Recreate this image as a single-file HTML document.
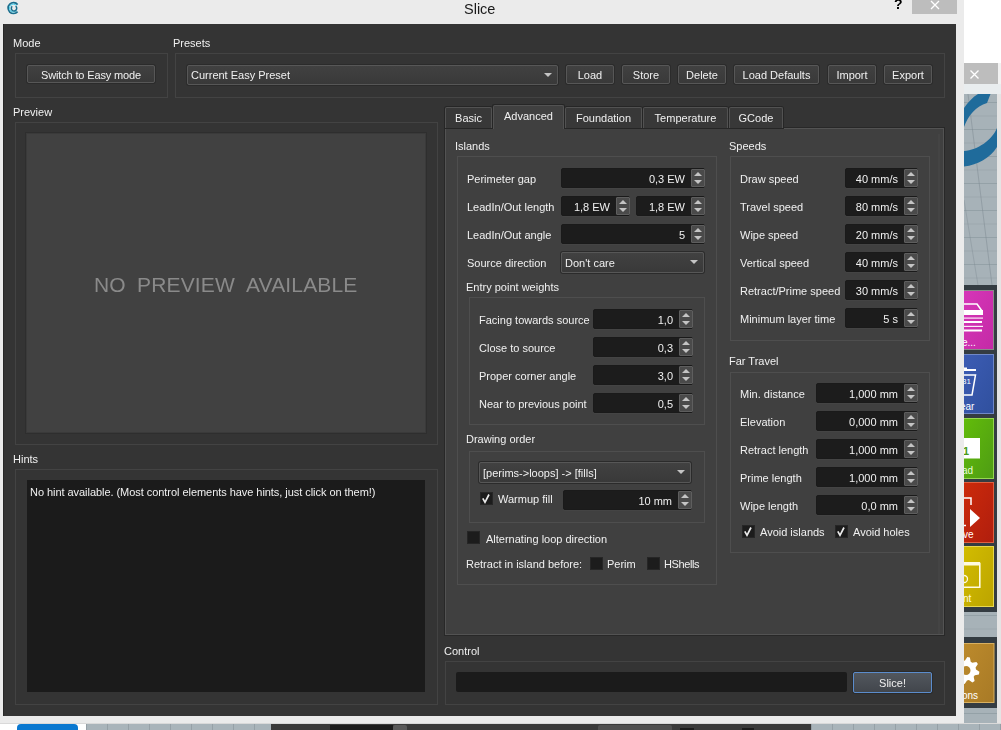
<!DOCTYPE html><html><head><meta charset="utf-8"><style>
*{margin:0;padding:0;box-sizing:border-box}
html,body{width:1001px;height:730px;overflow:hidden;background:#ebebeb;font-family:"Liberation Sans",sans-serif}
.b{position:absolute}
.t{position:absolute;white-space:nowrap;font-size:11px;line-height:13px;color:#f0f0f0;letter-spacing:0px;will-change:transform}
.frame{border:1px solid rgba(255,255,255,0.075)}
.btn{background:linear-gradient(#414141,#393939);border:1px solid #575757;border-radius:2px;box-shadow:0 0 0 1px #2b2b2b}
.spin{background:#1c1c1c;border:1px solid #1a1a1a;border-radius:2px;box-shadow:0 1px 0 #444}
.spb{background:#4a4a4a;border:1px solid #5e5e5e;border-radius:1px}
.chk{background:#1c1c1c;border:1px solid #262626}
.up{position:absolute;width:0;height:0;border-left:4px solid transparent;border-right:4px solid transparent;border-bottom:4px solid #c4c4c4}
.dn{position:absolute;width:0;height:0;border-left:4px solid transparent;border-right:4px solid transparent;border-top:4px solid #c4c4c4}
.tab{background:#383838;border:1px solid #525252;border-bottom:none;border-radius:2px 2px 0 0;box-shadow:0 0 0 1px #262626}
.slb{border-color:#5b8ccc;background:linear-gradient(#52575e,#42464c)}
.grid{background-color:#a9b4ba;background-image:linear-gradient(90deg,rgba(90,100,110,0.25) 1px,transparent 1px);background-size:21px 13px}
</style></head><body>

<svg class="b" style="left:964px;top:0" width="37" height="730" viewBox="964 0 37 730"><rect x="964" y="0" width="37" height="63" fill="#ffffff"/><rect x="964" y="63" width="34" height="21" fill="#bdbdbd"/><rect x="998" y="63" width="3" height="21" fill="#f2f2f2"/><path d="M970.5 70.5 L978.5 78.5 M978.5 70.5 L970.5 78.5" stroke="#fff" stroke-width="1.3"/><rect x="964" y="84" width="37" height="10" fill="#e9edef"/><rect x="997" y="94" width="4" height="636" fill="#e4e4e4"/><g transform="translate(964 94)"><rect x="0" y="0" width="33" height="191" fill="#a7b2b8"/><rect x="0" y="8.0" width="33" height="1" fill="#7f8b93" opacity="0.45"/><rect x="0" y="21.5" width="33" height="1" fill="#7f8b93" opacity="0.22"/><rect x="0" y="35.0" width="33" height="1" fill="#7f8b93" opacity="0.45"/><rect x="0" y="48.5" width="33" height="1" fill="#7f8b93" opacity="0.22"/><rect x="0" y="62.0" width="33" height="1" fill="#7f8b93" opacity="0.45"/><rect x="0" y="75.5" width="33" height="1" fill="#7f8b93" opacity="0.22"/><rect x="0" y="89.0" width="33" height="1" fill="#7f8b93" opacity="0.45"/><rect x="0" y="102.5" width="33" height="1" fill="#7f8b93" opacity="0.22"/><rect x="0" y="116.0" width="33" height="1" fill="#7f8b93" opacity="0.45"/><rect x="0" y="129.5" width="33" height="1" fill="#7f8b93" opacity="0.22"/><rect x="0" y="143.0" width="33" height="1" fill="#7f8b93" opacity="0.45"/><rect x="0" y="156.5" width="33" height="1" fill="#7f8b93" opacity="0.22"/><rect x="0" y="170.0" width="33" height="1" fill="#7f8b93" opacity="0.45"/><rect x="0" y="183.5" width="33" height="1" fill="#7f8b93" opacity="0.22"/></g><path d="M968 94 L992 285" stroke="#7f8b93" stroke-width="1" opacity="0.5"/><path d="M964 200 L978 285" stroke="#7f8b93" stroke-width="1" opacity="0.4"/><g transform="translate(964 94)"><path d="M 14 0 L 26.5 0 L 23 9 C 12 12 4 22 0 33 L 0 14 C 4 8 9 3 14 0 Z" fill="#1f6b9b"/><path d="M 33 34 L 33 53 C 26 64 14 71 0 72.5 L 0 57 C 14 56 28 46 33 34 Z" fill="#1f6b9b"/></g><rect x="964" y="285" width="33" height="327" fill="#343c42"/><defs><linearGradient id="g0" x1="0" y1="0" x2="1" y2="1"><stop offset="0" stop-color="#d636b8"/><stop offset="1" stop-color="#c42aa6"/></linearGradient></defs><rect x="963.5" y="290.5" width="30" height="59" fill="url(#g0)" stroke="#8a8a8a" stroke-width="1"/><defs><linearGradient id="g1" x1="0" y1="0" x2="1" y2="1"><stop offset="0" stop-color="#3c5cb4"/><stop offset="1" stop-color="#30509e"/></linearGradient></defs><rect x="963.5" y="354.5" width="30" height="59" fill="url(#g1)" stroke="#7088c8" stroke-width="1"/><defs><linearGradient id="g2" x1="0" y1="0" x2="1" y2="1"><stop offset="0" stop-color="#62bc0a"/><stop offset="1" stop-color="#4e9c14"/></linearGradient></defs><rect x="963.5" y="418.5" width="30" height="60" fill="url(#g2)" stroke="#96d850" stroke-width="1"/><defs><linearGradient id="g3" x1="0" y1="0" x2="1" y2="1"><stop offset="0" stop-color="#cc2a0a"/><stop offset="1" stop-color="#b01e0e"/></linearGradient></defs><rect x="963.5" y="482.5" width="30" height="60" fill="url(#g3)" stroke="#e06040" stroke-width="1"/><defs><linearGradient id="g4" x1="0" y1="0" x2="1" y2="1"><stop offset="0" stop-color="#d2bc00"/><stop offset="1" stop-color="#bca400"/></linearGradient></defs><rect x="963.5" y="546.5" width="30" height="60" fill="url(#g4)" stroke="#e8d850" stroke-width="1"/><path d="M964 304 L977 304 L982 311" fill="none" stroke="#fff" stroke-width="1.6"/><rect x="964" y="310" width="19" height="5" fill="#fff"/><rect x="964" y="317.5" width="19" height="1.2" fill="#fff" opacity="0.9"/><rect x="964" y="321" width="18" height="2" fill="#fff"/><rect x="964" y="325.8" width="19" height="1.2" fill="#fff" opacity="0.9"/><rect x="964" y="329.5" width="18" height="2" fill="#fff"/><text x="962" y="346" font-family="Liberation Sans" font-size="10" fill="#fff">e...</text><rect x="964" y="369" width="12" height="2" fill="#fff"/><rect x="964" y="367.5" width="3" height="2" fill="#fff"/><path d="M964 375 L975.5 375 L972 395 L964 395" fill="none" stroke="#fff" stroke-width="1.5"/><text x="962" y="384" font-family="Liberation Sans" font-size="8" fill="#fff">31</text><text x="960" y="409.5" font-family="Liberation Sans" font-size="10" fill="#fff">ear</text><rect x="964" y="438" width="16" height="20.5" fill="#fff"/><text x="963" y="455" font-family="Liberation Sans" font-size="11" font-weight="bold" fill="#4a9a12">1</text><text x="962" y="473.5" font-family="Liberation Sans" font-size="10" fill="#eaffd8">ad</text><path d="M964 498 L971 498 L971 505" fill="none" stroke="#fff" stroke-width="1.5"/><path d="M964 525.5 L966 525.5" fill="none" stroke="#fff" stroke-width="1.5"/><path d="M970 509 L980 518 L970 527 Z" fill="#fff"/><text x="963" y="538" font-family="Liberation Sans" font-size="10" fill="#fff">ve</text><path d="M964 563.5 L979.8 563.5 L979.8 587.2 L964 587.2" fill="none" stroke="#fffbe0" stroke-width="1.6"/><rect x="964" y="562" width="16" height="3.5" fill="#fffbe0"/><circle cx="964" cy="579" r="3.5" fill="none" stroke="#fffbe0" stroke-width="1.3"/><text x="963" y="601.5" font-family="Liberation Sans" font-size="10" fill="#fffbe0">nt</text><g transform="translate(964 612)"><rect x="0" y="0" width="33" height="25" fill="#a7b2b8"/><rect x="0" y="3.0" width="33" height="1" fill="#7f8b93" opacity="0.45"/><rect x="0" y="16.5" width="33" height="1" fill="#7f8b93" opacity="0.22"/></g><rect x="964" y="637" width="33" height="71" fill="#343c42"/><defs><linearGradient id="g9" x1="0" y1="0" x2="1" y2="1"><stop offset="0" stop-color="#bc8a2c"/><stop offset="1" stop-color="#a87a26"/></linearGradient></defs><rect x="963.5" y="643.5" width="30.5" height="59" fill="url(#g9)" stroke="#d8b060" stroke-width="1"/><path d="M976.0 669.5 L979.4 671.8 L978.9 674.4 L974.8 675.2 L973.7 676.8 L974.6 680.9 L972.4 682.4 L968.9 680.1 L967.0 680.5 L964.7 683.9 L962.1 683.4 L961.3 679.3 L959.7 678.2 L955.6 679.1 L954.1 676.9 L956.4 673.4 L956.0 671.5 L952.6 669.2 L953.1 666.6 L957.2 665.8 L958.3 664.2 L957.4 660.1 L959.6 658.6 L963.1 660.9 L965.0 660.5 L967.3 657.1 L969.9 657.6 L970.7 661.7 L972.3 662.8 L976.4 661.9 L977.9 664.1 L975.6 667.6 Z M970.5 670.5 A4.5 4.5 0 1 0 961.5 670.5 A4.5 4.5 0 1 0 970.5 670.5 Z" fill="#fff" fill-rule="evenodd"/><text x="962" y="698.5" font-family="Liberation Sans" font-size="10" fill="#fff">ons</text><g transform="translate(964 708)"><rect x="0" y="0" width="33" height="22" fill="#a7b2b8"/><rect x="0" y="5.0" width="33" height="1" fill="#7f8b93" opacity="0.45"/><rect x="0" y="18.5" width="33" height="1" fill="#7f8b93" opacity="0.22"/></g></svg>
<div class="b " style="left:0px;top:723px;width:1001px;height:7px;background:#ffffff"></div>
<div class="b " style="left:17px;top:724px;width:61px;height:6px;background:#0a78d0;border-radius:4px 4px 0 0"></div>
<div class="b grid" style="left:86px;top:724px;width:185px;height:6px;"></div>
<div class="b " style="left:271px;top:724px;width:540px;height:6px;background:#3a3a3a"></div>
<div class="b " style="left:330px;top:725px;width:63px;height:5px;background:#1c1c1c"></div>
<div class="b " style="left:393px;top:725px;width:14px;height:5px;background:#5a5a5a;border-radius:2px 2px 0 0"></div>
<div class="b " style="left:598px;top:725px;width:74px;height:5px;background:#505050;border-radius:2px 2px 0 0"></div>
<div class="b " style="left:680px;top:728px;width:14px;height:2px;background:#1c1c1c"></div>
<div class="b " style="left:742px;top:728px;width:12px;height:2px;background:#1c1c1c"></div>
<div class="b grid" style="left:811px;top:724px;width:190px;height:6px;"></div>
<div class="b " style="left:0px;top:722px;width:964px;height:1px;background:#e6e6e6"></div>
<div class="b " style="left:0px;top:723px;width:1001px;height:1px;background:#d9d9d9"></div>
<div class="b " style="left:0px;top:0px;width:964px;height:723px;background:#ebebeb"></div>
<svg class="b" style="left:1px;top:0px" width="24" height="20" viewBox="0 0 24 20">
<path d="M 16.6 4.6 A 5.4 5.4 0 1 0 16.6 11.6" fill="none" stroke="#1b6f8e" stroke-width="1.7"/>
<path d="M 15.4 5.6 A 3.9 3.9 0 1 0 15.4 10.6" fill="none" stroke="#46d2f0" stroke-width="1"/>
<path d="M 14.6 6.1 A 2.7 2.7 0 1 1 11.2 6.3" fill="none" stroke="#1b6f8e" stroke-width="1.5"/>
</svg>
<div class="t" style="left:464.0px;top:0.68px;font-size:14.5px;line-height:17px;color:#1a1a1a;letter-spacing:0">Slice</div>
<div class="t" style="left:894px;top:-4px;font-size:14px;line-height:16px;font-weight:bold;color:#000;letter-spacing:0">?</div>
<div class="b " style="left:912px;top:0px;width:45px;height:14px;background:#bdbdbd"></div>
<svg class="b" style="left:930px;top:-0.5px" width="10" height="10" viewBox="0 0 10 10"><path d="M1 1 L9 9 M9 1 L1 9" stroke="#fff" stroke-width="1.3"/></svg>
<div class="b " style="left:3px;top:24px;width:953px;height:692px;background:#343434;border-left:1px solid #282828"></div>
<div class="t" style="left:12.5px;top:36.69px;">Mode</div>
<div class="b frame" style="left:15px;top:53px;width:153px;height:45px;"></div>
<div class="b btn" style="left:27px;top:65px;width:128px;height:18px;"></div>
<div class="t" style="letter-spacing:-0.15px;left:26.5px;width:128px;text-align:center;top:68.69px;">Switch to Easy mode</div>
<div class="t" style="left:172.5px;top:36.69px;">Presets</div>
<div class="b frame" style="left:175px;top:53px;width:770px;height:45px;"></div>
<div class="b btn" style="left:187px;top:65px;width:371px;height:20px;"></div>
<div class="t" style="left:190.5px;top:68.69px;">Current Easy Preset</div>
<div class="dn" style="left:544px;top:72.5px"></div>
<div class="b btn" style="left:566px;top:65px;width:48px;height:19px;"></div>
<div class="t" style="left:565.5px;width:48px;text-align:center;top:68.69px;">Load</div>
<div class="b btn" style="left:622px;top:65px;width:48px;height:19px;"></div>
<div class="t" style="left:621.5px;width:48px;text-align:center;top:68.69px;">Store</div>
<div class="b btn" style="left:678px;top:65px;width:48px;height:19px;"></div>
<div class="t" style="left:677.5px;width:48px;text-align:center;top:68.69px;">Delete</div>
<div class="b btn" style="left:734px;top:65px;width:85px;height:19px;"></div>
<div class="t" style="left:733.5px;width:85px;text-align:center;top:68.69px;">Load Defaults</div>
<div class="b btn" style="left:828px;top:65px;width:48px;height:19px;"></div>
<div class="t" style="left:827.5px;width:48px;text-align:center;top:68.69px;">Import</div>
<div class="b btn" style="left:884px;top:65px;width:48px;height:19px;"></div>
<div class="t" style="left:883.5px;width:48px;text-align:center;top:68.69px;">Export</div>
<div class="t" style="left:12.5px;top:105.69px;">Preview</div>
<div class="b frame" style="left:15px;top:122px;width:423px;height:323px;"></div>
<div class="b " style="left:26px;top:133px;width:400px;height:300px;background:#414141;border:1px solid #3a3a3a;box-shadow:0 0 0 1px #2e2e2e"></div>
<div class="t" style="left:94px;top:272.5px;font-size:21px;line-height:24px;color:#8a8a8a;letter-spacing:0.15px">NO</div>
<div class="t" style="left:137px;top:272.5px;font-size:21px;line-height:24px;color:#8a8a8a;letter-spacing:0.15px">PREVIEW</div>
<div class="t" style="left:246px;top:272.5px;font-size:21px;line-height:24px;color:#8a8a8a;letter-spacing:0.15px">AVAILABLE</div>
<div class="t" style="left:12.5px;top:452.69px;">Hints</div>
<div class="b frame" style="left:15px;top:469px;width:423px;height:236px;"></div>
<div class="b " style="left:27px;top:480px;width:398px;height:212px;background:#1b1b1b"></div>
<div class="t" style="left:29.5px;top:485.69px;letter-spacing:-0.05px">No hint available. (Most control elements have hints, just click on them!)</div>
<div class="b " style="left:445px;top:128px;width:499px;height:507px;background:#404040;border:1px solid #535353;box-shadow:0 0 0 1px #282828"></div>
<div class="b " style="left:938px;top:134px;width:2px;height:500px;background:#444444"></div>
<div class="b tab" style="left:445px;top:107px;width:47px;height:21px;"></div>
<div class="t" style="left:444.5px;width:47px;text-align:center;top:111.69px;">Basic</div>
<div class="b tab" style="left:493px;top:105px;width:71px;height:24px;background:#404040;box-shadow:-1px -1px 0 #262626,1px -1px 0 #262626"></div>
<div class="t" style="left:492.5px;width:71px;text-align:center;top:110.19px;">Advanced</div>
<div class="b tab" style="left:565px;top:107px;width:77px;height:21px;"></div>
<div class="t" style="left:564.5px;width:77px;text-align:center;top:111.69px;">Foundation</div>
<div class="b tab" style="left:643px;top:107px;width:85px;height:21px;"></div>
<div class="t" style="left:642.5px;width:85px;text-align:center;top:111.69px;">Temperature</div>
<div class="b tab" style="left:729px;top:107px;width:54px;height:21px;"></div>
<div class="t" style="left:728.5px;width:54px;text-align:center;top:111.69px;">GCode</div>
<div class="t" style="left:454.5px;top:139.69px;">Islands</div>
<div class="b frame" style="left:457px;top:156px;width:260px;height:429px;"></div>
<div class="t" style="left:466.5px;top:172.69px;">Perimeter gap</div>
<div class="t" style="left:466.5px;top:200.69px;">LeadIn/Out length</div>
<div class="t" style="left:466.5px;top:228.69px;">LeadIn/Out angle</div>
<div class="t" style="left:466.5px;top:256.69px;">Source direction</div>
<div class="b spin" style="left:561px;top:168px;width:144px;height:20px;"></div>
<div class="b spb" style="left:691px;top:169px;width:14px;height:18px;"></div>
<div class="up" style="left:693.5px;top:172px"></div>
<div class="dn" style="left:693.5px;top:180px"></div>
<div class="t" style="left:385px;width:300px;text-align:right;top:173.19px;">0,3 EW</div>
<div class="b spin" style="left:561px;top:196px;width:69px;height:20px;"></div>
<div class="b spb" style="left:616px;top:197px;width:14px;height:18px;"></div>
<div class="up" style="left:618.5px;top:200px"></div>
<div class="dn" style="left:618.5px;top:208px"></div>
<div class="t" style="left:310px;width:300px;text-align:right;top:201.19px;">1,8 EW</div>
<div class="b spin" style="left:636px;top:196px;width:69px;height:20px;"></div>
<div class="b spb" style="left:691px;top:197px;width:14px;height:18px;"></div>
<div class="up" style="left:693.5px;top:200px"></div>
<div class="dn" style="left:693.5px;top:208px"></div>
<div class="t" style="left:385px;width:300px;text-align:right;top:201.19px;">1,8 EW</div>
<div class="b spin" style="left:561px;top:224px;width:144px;height:20px;"></div>
<div class="b spb" style="left:691px;top:225px;width:14px;height:18px;"></div>
<div class="up" style="left:693.5px;top:228px"></div>
<div class="dn" style="left:693.5px;top:236px"></div>
<div class="t" style="left:385px;width:300px;text-align:right;top:229.19px;">5</div>
<div class="b btn" style="left:561px;top:252px;width:143px;height:21px;"></div>
<div class="t" style="left:564.5px;top:256.69px;">Don't care</div>
<div class="dn" style="left:690px;top:260.0px"></div>
<div class="t" style="left:465.5px;top:280.69px;">Entry point weights</div>
<div class="b frame" style="left:469px;top:297px;width:236px;height:128px;"></div>
<div class="t" style="left:478.5px;top:313.69px;">Facing towards source</div>
<div class="b spin" style="left:593px;top:309px;width:100px;height:20px;"></div>
<div class="b spb" style="left:679px;top:310px;width:14px;height:18px;"></div>
<div class="up" style="left:681.5px;top:313px"></div>
<div class="dn" style="left:681.5px;top:321px"></div>
<div class="t" style="left:373px;width:300px;text-align:right;top:314.19px;">1,0</div>
<div class="t" style="left:478.5px;top:341.69px;">Close to source</div>
<div class="b spin" style="left:593px;top:337px;width:100px;height:20px;"></div>
<div class="b spb" style="left:679px;top:338px;width:14px;height:18px;"></div>
<div class="up" style="left:681.5px;top:341px"></div>
<div class="dn" style="left:681.5px;top:349px"></div>
<div class="t" style="left:373px;width:300px;text-align:right;top:342.19px;">0,3</div>
<div class="t" style="left:478.5px;top:369.69px;">Proper corner angle</div>
<div class="b spin" style="left:593px;top:365px;width:100px;height:20px;"></div>
<div class="b spb" style="left:679px;top:366px;width:14px;height:18px;"></div>
<div class="up" style="left:681.5px;top:369px"></div>
<div class="dn" style="left:681.5px;top:377px"></div>
<div class="t" style="left:373px;width:300px;text-align:right;top:370.19px;">3,0</div>
<div class="t" style="left:478.5px;top:397.69px;">Near to previous point</div>
<div class="b spin" style="left:593px;top:393px;width:100px;height:20px;"></div>
<div class="b spb" style="left:679px;top:394px;width:14px;height:18px;"></div>
<div class="up" style="left:681.5px;top:397px"></div>
<div class="dn" style="left:681.5px;top:405px"></div>
<div class="t" style="left:373px;width:300px;text-align:right;top:398.19px;">0,5</div>
<div class="t" style="left:465.5px;top:432.69px;">Drawing order</div>
<div class="b frame" style="left:469px;top:451px;width:236px;height:72px;"></div>
<div class="b btn" style="left:479px;top:462px;width:212px;height:21px;"></div>
<div class="t" style="left:482.5px;top:466.69px;">[perims-&gt;loops] -&gt; [fills]</div>
<div class="dn" style="left:677px;top:470.0px"></div>
<div class="b chk" style="left:480px;top:492px;width:13px;height:13px;"></div>
<svg class="b" style="left:480px;top:492px" width="13" height="13" viewBox="0 0 13 13"><path d="M 2.8 6.3 L 5 10.3 L 9 2.5" fill="none" stroke="#ececec" stroke-width="1.7"/></svg>
<div class="t" style="left:497.5px;top:492.69px;">Warmup fill</div>
<div class="b spin" style="left:563px;top:490px;width:129px;height:20px;"></div>
<div class="b spb" style="left:678px;top:491px;width:14px;height:18px;"></div>
<div class="up" style="left:680.5px;top:494px"></div>
<div class="dn" style="left:680.5px;top:502px"></div>
<div class="t" style="left:372px;width:300px;text-align:right;top:495.19px;">10 mm</div>
<div class="b chk" style="left:467px;top:531px;width:13px;height:13px;"></div>
<div class="t" style="left:485.5px;top:532.69px;">Alternating loop direction</div>
<div class="t" style="left:465.5px;top:557.69px;">Retract in island before:</div>
<div class="b chk" style="left:590px;top:557px;width:13px;height:13px;"></div>
<div class="t" style="left:606.5px;top:557.69px;">Perim</div>
<div class="b chk" style="left:647px;top:557px;width:13px;height:13px;"></div>
<div class="t" style="left:663.5px;top:557.69px;letter-spacing:-0.4px">HShells</div>
<div class="t" style="left:728.5px;top:139.69px;">Speeds</div>
<div class="b frame" style="left:730px;top:156px;width:200px;height:185px;"></div>
<div class="t" style="left:739.5px;top:172.69px;">Draw speed</div>
<div class="b spin" style="left:845px;top:168px;width:73px;height:20px;"></div>
<div class="b spb" style="left:904px;top:169px;width:14px;height:18px;"></div>
<div class="up" style="left:906.5px;top:172px"></div>
<div class="dn" style="left:906.5px;top:180px"></div>
<div class="t" style="left:598px;width:300px;text-align:right;top:173.19px;">40 mm/s</div>
<div class="t" style="left:739.5px;top:200.69px;">Travel speed</div>
<div class="b spin" style="left:845px;top:196px;width:73px;height:20px;"></div>
<div class="b spb" style="left:904px;top:197px;width:14px;height:18px;"></div>
<div class="up" style="left:906.5px;top:200px"></div>
<div class="dn" style="left:906.5px;top:208px"></div>
<div class="t" style="left:598px;width:300px;text-align:right;top:201.19px;">80 mm/s</div>
<div class="t" style="left:739.5px;top:228.69px;">Wipe speed</div>
<div class="b spin" style="left:845px;top:224px;width:73px;height:20px;"></div>
<div class="b spb" style="left:904px;top:225px;width:14px;height:18px;"></div>
<div class="up" style="left:906.5px;top:228px"></div>
<div class="dn" style="left:906.5px;top:236px"></div>
<div class="t" style="left:598px;width:300px;text-align:right;top:229.19px;">20 mm/s</div>
<div class="t" style="left:739.5px;top:256.69px;">Vertical speed</div>
<div class="b spin" style="left:845px;top:252px;width:73px;height:20px;"></div>
<div class="b spb" style="left:904px;top:253px;width:14px;height:18px;"></div>
<div class="up" style="left:906.5px;top:256px"></div>
<div class="dn" style="left:906.5px;top:264px"></div>
<div class="t" style="left:598px;width:300px;text-align:right;top:257.19px;">40 mm/s</div>
<div class="t" style="left:739.5px;top:284.69px;">Retract/Prime speed</div>
<div class="b spin" style="left:845px;top:280px;width:73px;height:20px;"></div>
<div class="b spb" style="left:904px;top:281px;width:14px;height:18px;"></div>
<div class="up" style="left:906.5px;top:284px"></div>
<div class="dn" style="left:906.5px;top:292px"></div>
<div class="t" style="left:598px;width:300px;text-align:right;top:285.19px;">30 mm/s</div>
<div class="t" style="left:739.5px;top:312.69px;">Minimum layer time</div>
<div class="b spin" style="left:845px;top:308px;width:73px;height:20px;"></div>
<div class="b spb" style="left:904px;top:309px;width:14px;height:18px;"></div>
<div class="up" style="left:906.5px;top:312px"></div>
<div class="dn" style="left:906.5px;top:320px"></div>
<div class="t" style="left:598px;width:300px;text-align:right;top:313.19px;">5 s</div>
<div class="t" style="left:728.5px;top:354.69px;">Far Travel</div>
<div class="b frame" style="left:730px;top:372px;width:200px;height:181px;"></div>
<div class="t" style="left:739.5px;top:387.69px;">Min. distance</div>
<div class="b spin" style="left:816px;top:383px;width:102px;height:20px;"></div>
<div class="b spb" style="left:904px;top:384px;width:14px;height:18px;"></div>
<div class="up" style="left:906.5px;top:387px"></div>
<div class="dn" style="left:906.5px;top:395px"></div>
<div class="t" style="left:598px;width:300px;text-align:right;top:388.19px;">1,000 mm</div>
<div class="t" style="left:739.5px;top:415.69px;">Elevation</div>
<div class="b spin" style="left:816px;top:411px;width:102px;height:20px;"></div>
<div class="b spb" style="left:904px;top:412px;width:14px;height:18px;"></div>
<div class="up" style="left:906.5px;top:415px"></div>
<div class="dn" style="left:906.5px;top:423px"></div>
<div class="t" style="left:598px;width:300px;text-align:right;top:416.19px;">0,000 mm</div>
<div class="t" style="left:739.5px;top:443.69px;">Retract length</div>
<div class="b spin" style="left:816px;top:439px;width:102px;height:20px;"></div>
<div class="b spb" style="left:904px;top:440px;width:14px;height:18px;"></div>
<div class="up" style="left:906.5px;top:443px"></div>
<div class="dn" style="left:906.5px;top:451px"></div>
<div class="t" style="left:598px;width:300px;text-align:right;top:444.19px;">1,000 mm</div>
<div class="t" style="left:739.5px;top:471.69px;">Prime length</div>
<div class="b spin" style="left:816px;top:467px;width:102px;height:20px;"></div>
<div class="b spb" style="left:904px;top:468px;width:14px;height:18px;"></div>
<div class="up" style="left:906.5px;top:471px"></div>
<div class="dn" style="left:906.5px;top:479px"></div>
<div class="t" style="left:598px;width:300px;text-align:right;top:472.19px;">1,000 mm</div>
<div class="t" style="left:739.5px;top:499.69px;">Wipe length</div>
<div class="b spin" style="left:816px;top:495px;width:102px;height:20px;"></div>
<div class="b spb" style="left:904px;top:496px;width:14px;height:18px;"></div>
<div class="up" style="left:906.5px;top:499px"></div>
<div class="dn" style="left:906.5px;top:507px"></div>
<div class="t" style="left:598px;width:300px;text-align:right;top:500.19px;">0,0 mm</div>
<div class="b chk" style="left:742px;top:525px;width:13px;height:13px;"></div>
<svg class="b" style="left:742px;top:525px" width="13" height="13" viewBox="0 0 13 13"><path d="M 2.8 6.3 L 5 10.3 L 9 2.5" fill="none" stroke="#ececec" stroke-width="1.7"/></svg>
<div class="t" style="left:759.5px;top:525.69px;">Avoid islands</div>
<div class="b chk" style="left:835px;top:525px;width:13px;height:13px;"></div>
<svg class="b" style="left:835px;top:525px" width="13" height="13" viewBox="0 0 13 13"><path d="M 2.8 6.3 L 5 10.3 L 9 2.5" fill="none" stroke="#ececec" stroke-width="1.7"/></svg>
<div class="t" style="left:852.5px;top:525.69px;">Avoid holes</div>
<div class="t" style="left:443.5px;top:644.69px;">Control</div>
<div class="b frame" style="left:445px;top:661px;width:500px;height:44px;"></div>
<div class="b " style="left:456px;top:672px;width:391px;height:20px;background:#1b1b1b;border-radius:2px"></div>
<div class="b btn slb" style="left:853px;top:672px;width:79px;height:21px;"></div>
<div class="t" style="left:852.5px;width:79px;text-align:center;top:676.69px;">Slice!</div>
</body></html>
